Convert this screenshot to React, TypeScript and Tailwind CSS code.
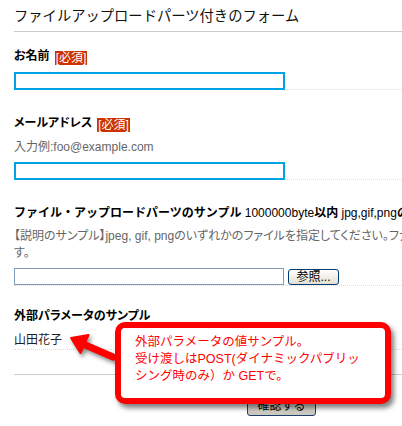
import React from "react";

const Badge = () => (
  <span className="ml-[5px] inline-block h-[14px] bg-[#cc3300] px-[1px] align-[-2px] text-[12px] font-normal leading-[14px] text-white">
    [必須]
  </span>
);

export default function App() {
  return (
    <div className="relative h-[426px] w-[402px] overflow-hidden bg-white font-['Liberation_Sans','Noto_Sans_CJK_JP',sans-serif] text-[12px] text-black">
      <div className="w-[600px] pl-[14px]">
        <h1 className="border-b border-[#cccccc] pb-[5px] pt-[6px] text-[14.3px] font-normal leading-[20px] text-[#111]">
          ファイルアップロードパーツ付きのフォーム
        </h1>

        <div className="[font-feature-settings:'palt']">
          {/* row 1 */}
          <div className="border-b border-dotted border-[#dddddd] pt-[16px]">
            <div className="font-bold leading-[16px]">
              お名前
              <Badge />
            </div>
            <div className="relative -mb-px mt-[7px] h-[18px] w-[271px] border-2 border-[#00a3e6] bg-white" />
          </div>

          {/* row 2 */}
          <div className="border-b border-dotted border-[#dddddd] pt-[25px]">
            <div className="font-bold leading-[16px]">
              メールアドレス
              <Badge />
            </div>
            <div className="mt-[7px] leading-[16px] text-[#666666]">入力例:foo@example.com</div>
            <div className="relative -mb-px mt-[7px] h-[18px] w-[271px] border-2 border-[#00a3e6] bg-white" />
          </div>

          {/* row 3 */}
          <div className="border-b border-dotted border-[#dddddd] pt-[25px]">
            <div className="whitespace-nowrap font-bold leading-[16px] [font-feature-settings:normal]">
              ファイル・アップロードパーツのサンプル <span className="font-normal">1000000byte</span>以内{" "}
              <span className="font-normal">jpg,gif,png</span>のみ
            </div>
            <div className="mt-[7px] leading-[17px] text-[#666666]">
              <div className="whitespace-nowrap">
                【説明のサンプル】jpeg, gif, pngのいずれかのファイルを指定してください。ファイルサイズは1000000byte以内で
              </div>
              <div>す。</div>
            </div>
            <div className="mt-[6px] flex items-start gap-[4px]">
              <div className="h-[17px] w-[270px] border border-[#7f9db9] bg-white" />
              <div className="mt-[1px] flex h-[16px] w-[51px] items-center justify-center rounded-[3px] border border-[#003c74] bg-gradient-to-b from-white to-[#e3e0d2] text-[12px] leading-none">
                参照...
              </div>
            </div>
          </div>

          {/* row 4 */}
          <div className="border-b border-dotted border-[#dddddd] pb-[1px] pt-[22px]">
            <div className="font-bold leading-[16px]">外部パラメータのサンプル</div>
            <div className="mt-[8px] leading-[16px] text-[#222]">山田花子</div>
          </div>
        </div>

        <div className="mt-[24px] border-t border-[#cccccc]" />

        <div className="ml-[233px] mt-[20px] flex h-[21px] w-[69px] items-center justify-center rounded-[3px] border border-[#1c3d6e] bg-gradient-to-b from-[#f4f3ee] to-[#c9c6bb] text-[12px]">
          確認する
        </div>
      </div>

      {/* arrow */}
      <svg className="pointer-events-none absolute left-0 top-0 h-[426px] w-[402px] drop-shadow-[2px_3px_2px_rgba(0,0,0,0.45)]" viewBox="0 0 402 426">
        <line x1="83" y1="344" x2="113" y2="357" stroke="#ff0000" strokeWidth="7" strokeLinecap="round" />
        <polygon points="71,338 88.5,335 80.5,353" fill="#ff0000" stroke="#ff0000" strokeWidth="2" strokeLinejoin="round" />
      </svg>

      {/* callout */}
      <div className="absolute left-[115px] top-[322px] h-[82px] w-[276px] rounded-[10px] border-[6px] border-[#ff0000] bg-white pl-[14px] pt-[6px] shadow-[3px_4px_5px_rgba(0,0,0,0.5)]">
        <div className="whitespace-nowrap text-[12.5px] leading-[17px] text-[#ff0000]">
          <div>外部パラメータの値サンプル。</div>
          <div>受け渡しはPOST(ダイナミックパブリッ</div>
          <div>シング時のみ）か GETで。</div>
        </div>
      </div>
    </div>
  );
}
